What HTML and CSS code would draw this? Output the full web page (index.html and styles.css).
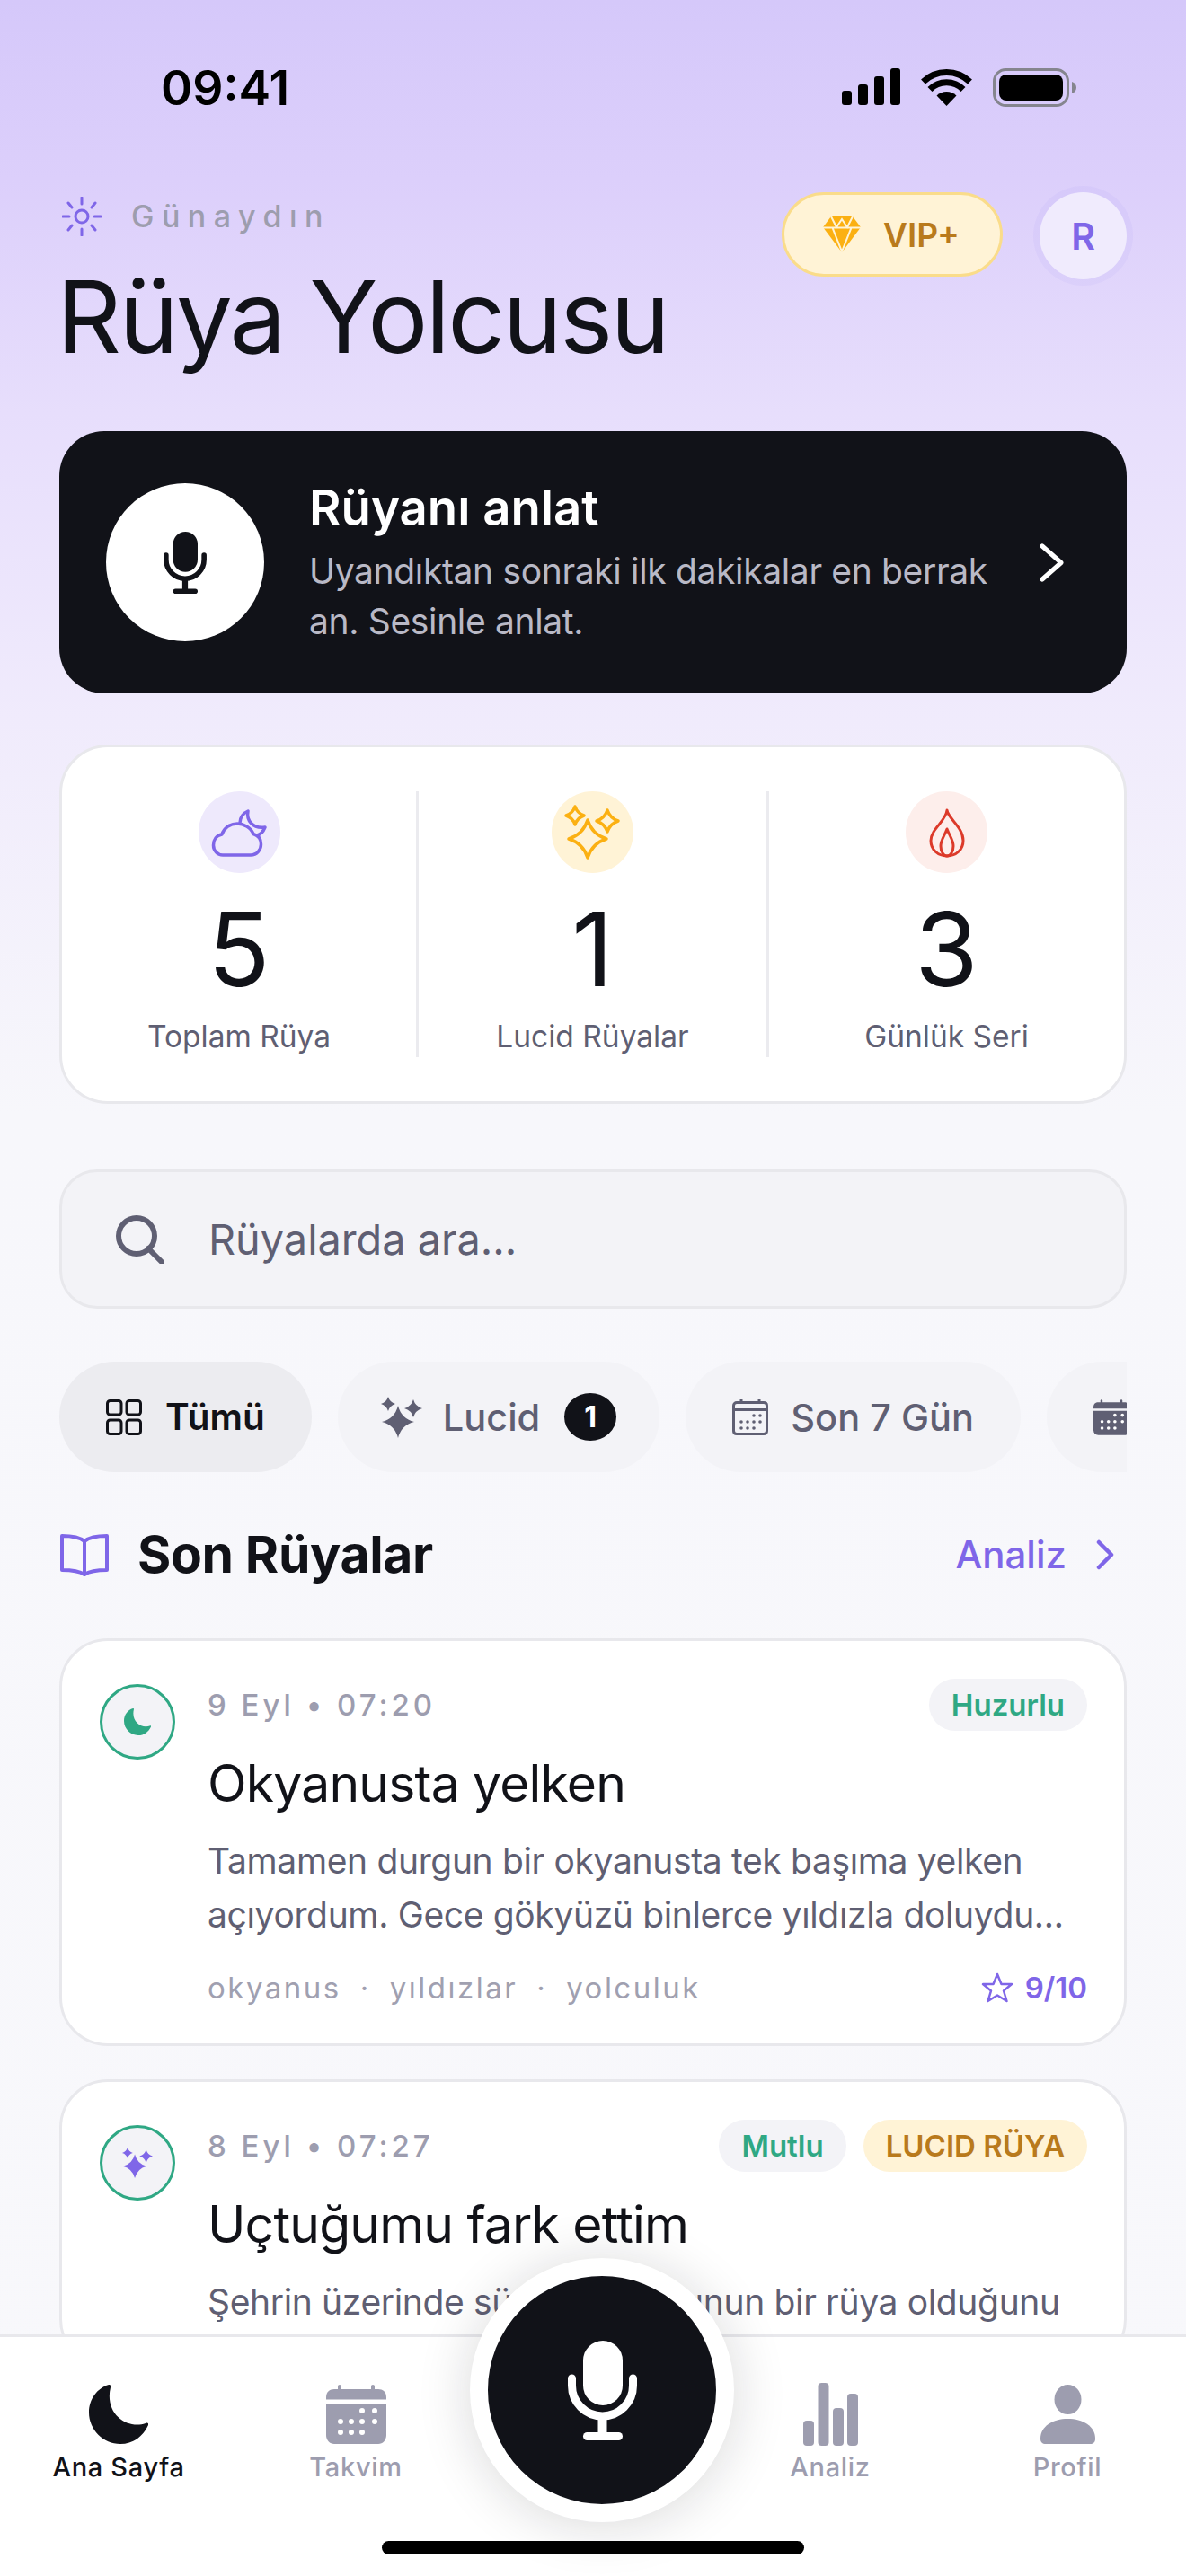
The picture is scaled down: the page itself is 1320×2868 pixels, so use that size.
FILE: index.html
```html
<!DOCTYPE html>
<html lang="tr">
<head>
<meta charset="utf-8">
<title>Rüya Yolcusu</title>
<link rel="stylesheet" href="styles.css">
</head>
<body>
<svg class="sprite" xmlns="http://www.w3.org/2000/svg">
  <symbol id="mic" viewBox="0 0 77 111">
    <rect x="17" y="0" width="44" height="72" rx="22" fill="currentColor"/>
    <path d="M4.5 42v8a34 34 0 0 0 68 0v-8" fill="none" stroke="currentColor" stroke-width="9" stroke-linecap="round"/>
    <rect x="33.5" y="85" width="10" height="20" fill="currentColor"/>
    <rect x="17" y="102" width="44" height="9" rx="4.5" fill="currentColor"/>
  </symbol>
  <symbol id="moon" viewBox="0 0 66 66">
    <path fill="currentColor" d="M22 0C9 4 0 16 0 31C0 50 16 66 35 66C49 66 60 58 66 45C67 43 65 42 63 43C43 50 17 33 24 3C24.500 1 23.500-.5 22 0Z"/>
  </symbol>
  <symbol id="sparkles" viewBox="0 0 46 46">
    <path fill="currentColor" d="M19 10Q22.600 24.400 37 28Q22.600 31.600 19 46Q15.400 31.600 1 28Q15.400 24.400 19 10Z"/>
    <path fill="currentColor" d="M8 0Q9.800 6.200 16 8Q9.800 9.800 8 16Q6.200 9.800 0 8Q6.200 6.200 8 0Z"/>
    <path fill="currentColor" d="M36 3Q38.200 10.800 46 13Q38.200 15.200 36 23Q33.800 15.200 26 13Q33.800 10.800 36 3Z"/>
  </symbol>
  <symbol id="calfill" viewBox="0 0 67 66">
    <rect x="13" y="0" width="4" height="8" rx="2" fill="currentColor"/>
    <rect x="50" y="0" width="4" height="8" rx="2" fill="currentColor"/>
    <path fill="currentColor" d="M0 16.500V14C0 8 4 5 9 5H58C63 5 67 8 67 14V16.500Z"/>
    <path fill="currentColor" fill-rule="evenodd" d="M0 21H67V56C67 62 63 66 58 66H9C4 66 0 62 0 56Z"/>
    <g fill="#fff">
      <circle cx="40" cy="29" r="3"/><circle cx="54" cy="29" r="3"/>
      <circle cx="16" cy="41" r="3"/><circle cx="28" cy="41" r="3"/><circle cx="40" cy="41" r="3"/><circle cx="54" cy="41" r="3"/>
      <circle cx="16" cy="53" r="3"/><circle cx="28" cy="53" r="3"/><circle cx="40" cy="53" r="3"/>
    </g>
  </symbol>
  <symbol id="chev" viewBox="0 0 20 34">
    <path d="M3 3L17 17L3 31" fill="none" stroke="currentColor" stroke-width="4.500" stroke-linecap="round" stroke-linejoin="round"/>
  </symbol>
</svg>

<div class="phone">
  <main class="main">
    <div class="status">
      <span class="time">09:41</span>
      <div class="status-icons">
        <svg class="ic-signal" viewBox="0 0 65 41"><rect x="0" y="25" width="11" height="16" rx="3"/><rect x="18" y="18" width="11" height="23" rx="3"/><rect x="36" y="9" width="11" height="32" rx="3"/><rect x="54" y="0" width="11" height="41" rx="3"/></svg>
        <svg class="ic-wifi" viewBox="0 0 57 42"><path d="M28.500 42L17.500 30.500A15.500 15.500 0 0 1 39.500 30.500Z"/><path class="arc" d="M10 23.500A26 26 0 0 1 47 23.500"/><path class="arc" d="M2.500 15A37.500 37.500 0 0 1 54.500 15"/></svg>
        <svg class="ic-batt" viewBox="0 0 93 43"><rect class="batt-shell" x="1.500" y="1.500" width="82" height="40" rx="13"/><rect x="7" y="7" width="71" height="29" rx="8"/><path class="batt-nub" d="M88 15C91 16 93 18 93 21.500C93 25 91 27 88 28Z"/></svg>
      </div>
    </div>

    <header class="header">
      <div class="header-left">
        <div class="greeting">
          <svg class="ic-sun" viewBox="0 0 44 44"><circle cx="22" cy="22" r="7"/><path d="M22 1V8M22 36V43M1 22H8M36 22H43M7 7L11 12M37 7L33 12M7 37L11 32M37 37L33 32"/></svg>
          <span class="greeting-text">Günaydın</span>
        </div>
        <h1 class="title">Rüya Yolcusu</h1>
      </div>
      <div class="header-right">
        <div class="vip">
          <svg class="ic-diamond" viewBox="0 0 42 40"><path class="d-fill" d="M9 0H33L42 12L21 40L0 12Z"/><path class="d-line" d="M0 12.500H42M10.500 12.500L21 39L31.500 12.500M9 0L15 12L21 3L27 12L33 0"/></svg>
          <span>VIP+</span>
        </div>
        <div class="avatar">R</div>
      </div>
    </header>

    <section class="hero">
      <div class="hero-mic"><svg class="ic-hero-mic"><use href="#mic"/></svg></div>
      <div class="hero-text">
        <div class="hero-title">Rüyanı anlat</div>
        <div class="hero-sub">Uyandıktan sonraki ilk dakikalar en berrak an. Sesinle anlat.</div>
      </div>
      <svg class="ic-hero-chev" viewBox="0 0 27 43"><path d="M3 3L24 21.500L3 40"/></svg>
    </section>

    <section class="stats">
      <div class="stat">
        <svg class="stat-ic stat-ic-purple" viewBox="0 0 91 91"><circle class="disc" cx="45.500" cy="45.500" r="45.500"/><path d="M27 71H58C65 71 69.500 65 69.500 59C69.500 53 66 49 61 47.500C58 40 50 36 43 36C35 36 28 41 26 48C20 49 16.500 54 16.500 60C16.500 66 21 71 27 71Z"/><path d="M46 35C46 29 50 24 55 22C53 32 60 42 74 40C72 45 69 48 65 49"/></svg>
        <div class="stat-num">5</div>
        <div class="stat-label">Toplam Rüya</div>
      </div>
      <div class="stat">
        <svg class="stat-ic stat-ic-amber" viewBox="0 0 91 91"><circle class="disc" cx="45.500" cy="45.500" r="45.500"/><path d="M40 32Q45 48 61 53Q45 58 40 74Q35 58 19 53Q35 48 40 32Z"/><path d="M26 17Q28.500 24.500 36 27Q28.500 29.500 26 37Q23.500 29.500 16 27Q23.500 24.500 26 17Z"/><path d="M62 21Q65 30 74 33Q65 36 62 45Q59 36 50 33Q59 30 62 21Z"/></svg>
        <div class="stat-num">1</div>
        <div class="stat-label">Lucid Rüyalar</div>
      </div>
      <div class="stat">
        <svg class="stat-ic stat-ic-red" viewBox="0 0 91 91"><circle class="disc" cx="45.500" cy="45.500" r="45.500"/><path d="M46 21C47 30 64 40 64 55C64 65 56 72 46 72C36 72 28 65 28 55C28 42 45 33 46 21Z"/><path d="M46 42C49 50 53 54 53 61C53 67 50 72 46 72C42 72 39 67 39 61C39 54 43 50 46 42Z"/></svg>
        <div class="stat-num">3</div>
        <div class="stat-label">Günlük Seri</div>
      </div>
    </section>

    <div class="search">
      <svg class="ic-search" viewBox="0 0 54 54"><circle cx="23" cy="23" r="20"/><path d="M36 37L51 52"/></svg>
      <span>Rüyalarda ara...</span>
    </div>

    <div class="chips">
      <div class="chip chip-active">
        <svg class="ic-grid" viewBox="0 0 40 40"><rect x="1.500" y="1.500" width="15.500" height="15.500" rx="3"/><rect x="23" y="1.500" width="15.500" height="15.500" rx="3"/><rect x="1.500" y="23" width="15.500" height="15.500" rx="3"/><rect x="23" y="23" width="15.500" height="15.500" rx="3"/></svg>
        <span>Tümü</span>
      </div>
      <div class="chip chip-lucid">
        <svg class="ic-chip-spark"><use href="#sparkles"/></svg>
        <span>Lucid</span>
        <span class="badge">1</span>
      </div>
      <div class="chip chip-week">
        <svg class="ic-cal-line" viewBox="0 0 40 40"><path class="cl" d="M5 3.500H35C37.500 3.500 38.500 5 38.500 7V35C38.500 37.500 37 38.500 35 38.500H5C3 38.500 1.500 37.500 1.500 35V7C1.500 5 3 3.500 5 3.500ZM1.500 11.500H38.500M10 0V4M30 0V4"/><g class="cd"><circle cx="24" cy="18" r="1.800"/><circle cx="31" cy="18" r="1.800"/><circle cx="10" cy="25" r="1.800"/><circle cx="17" cy="25" r="1.800"/><circle cx="24" cy="25" r="1.800"/><circle cx="31" cy="25" r="1.800"/><circle cx="10" cy="32" r="1.800"/><circle cx="17" cy="32" r="1.800"/><circle cx="24" cy="32" r="1.800"/></g></svg>
        <span>Son 7 Gün</span>
      </div>
      <div class="chip chip-clipped">
        <svg class="ic-cal-fill"><use href="#calfill"/></svg>
      </div>
    </div>

    <div class="section-head">
      <div class="section-left">
        <svg class="ic-book" viewBox="0 0 54 47"><path d="M27 8C21 3 12 2 2 2V40C12 40 21 41 27 45C33 41 42 40 52 40V2C42 2 33 3 27 8ZM27 8V45"/></svg>
        <h2 class="section-title">Son Rüyalar</h2>
      </div>
      <div class="section-link">
        <span>Analiz</span>
        <svg class="ic-link-chev"><use href="#chev"/></svg>
      </div>
    </div>

    <article class="card">
      <div class="card-avatar"><svg class="ic-card-moon"><use href="#moon"/></svg></div>
      <div class="card-body">
        <div class="card-top">
          <span class="card-date">9 Eyl • 07:20</span>
          <div class="pills"><span class="pill pill-green">Huzurlu</span></div>
        </div>
        <h3 class="card-title">Okyanusta yelken</h3>
        <p class="card-text">Tamamen durgun bir okyanusta tek başıma yelken açıyordum. Gece gökyüzü binlerce yıldızla doluydu...</p>
        <div class="card-foot">
          <span class="tags">okyanus<i>·</i>yıldızlar<i>·</i>yolculuk</span>
          <span class="score"><svg class="ic-star" viewBox="0 0 36 36"><path d="M18 3L22.500 14H34L25 21.500L28.500 33L18 26.500L7.500 33L11 21.500L2 14H13.500Z"/></svg>9/10</span>
        </div>
      </div>
    </article>

    <article class="card">
      <div class="card-avatar"><svg class="ic-card-spark"><use href="#sparkles"/></svg></div>
      <div class="card-body">
        <div class="card-top">
          <span class="card-date">8 Eyl • 07:27</span>
          <div class="pills"><span class="pill pill-green">Mutlu</span><span class="pill pill-amber">LUCID RÜYA</span></div>
        </div>
        <h3 class="card-title">Uçtuğumu fark ettim</h3>
        <p class="card-text">Şehrin üzerinde süzülürken bunun bir rüya olduğunu</p>
      </div>
    </article>
  </main>

  <nav class="nav">
    <div class="nav-item nav-active"><span class="nav-ic"><svg class="ic-nav-moon"><use href="#moon"/></svg></span><span>Ana Sayfa</span></div>
    <div class="nav-item"><span class="nav-ic"><svg class="ic-nav-cal"><use href="#calfill"/></svg></span><span>Takvim</span></div>
    <div class="nav-item"></div>
    <div class="nav-item"><span class="nav-ic"><svg class="ic-nav-bars" viewBox="0 0 61 70"><rect x="0" y="42" width="12" height="28" rx="4"/><rect x="16.500" y="0" width="12" height="70" rx="4"/><rect x="33" y="28" width="12" height="42" rx="4"/><rect x="49" y="12" width="12" height="58" rx="4"/></svg></span><span>Analiz</span></div>
    <div class="nav-item"><span class="nav-ic"><svg class="ic-nav-user" viewBox="0 0 61 66"><ellipse cx="30.500" cy="16.500" rx="15" ry="16.500"/><path d="M0 60C0 46 14 38 30.500 38C47 38 61 46 61 60C61 64 59 66 55 66H6C2 66 0 64 0 60Z"/></svg></span><span>Profil</span></div>
    <div class="record"><svg class="ic-record-mic"><use href="#mic"/></svg></div>
    <div class="home-bar"></div>
  </nav>
</div>
</body>
</html>
```

FILE: styles.css
```css
* { box-sizing: border-box; }
html, body { margin: 0; padding: 0; }
body { font-family: "Inter", "Liberation Sans", sans-serif; color: #111218; }
.sprite { display: none; }

.phone {
  width: 1320px;
  height: 2868px;
  display: flex;
  flex-direction: column;
  overflow: hidden;
  background: linear-gradient(180deg, #d5c8fa 0, #dccffb 200px, #e7defc 460px, #f0ebfc 800px, #f7f7fb 1240px, #f8f8fb 100%);
}
.main { flex: 1; min-height: 0; overflow: hidden; padding: 0 66px; }

/* status bar */
.status { height: 214px; display: flex; justify-content: space-between; align-items: flex-start; padding: 75px 56px 0 113px; }
.time { font-size: 53.5px; line-height: 46px; font-weight: 600; color: #000; }
.status-icons { display: flex; align-items: flex-start; margin-top: 1px; }
.ic-signal { width: 65px; height: 41px; margin-right: 23px; }
.ic-wifi { width: 57px; height: 42px; margin-right: 23px; }
.ic-wifi .arc { fill: none; stroke: #000; stroke-width: 7; }
.ic-batt { width: 93px; height: 43px; }
.batt-shell { fill: none; stroke: #85858e; stroke-width: 3; }
.batt-nub { fill: #85858e; }

/* header */
.header { display: flex; justify-content: space-between; align-items: flex-start; }
.greeting { display: flex; align-items: center; gap: 33px; height: 44px; margin: 5px 0 0 3px; }
.ic-sun { width: 44px; height: 44px; fill: none; stroke: #7f66e8; stroke-width: 3; stroke-linecap: round; }
.greeting-text { font-size: 34px; font-weight: 500; letter-spacing: 8.5px; color: #9d9dae; line-height: 44px; }
.title { margin: 29px 0 0 -3px; font-size: 112px; line-height: 120px; font-weight: 400; letter-spacing: -2.7px; color: #111218; }
.header-right { display: flex; align-items: flex-start; gap: 41px; }
.vip {
  width: 246px; height: 94px; display: flex; align-items: center; gap: 25px; padding-left: 43px;
  background: #fff3d6; border: 3px solid #fadc8a; border-radius: 47px;
  font-size: 37px; font-weight: 600; color: #b97a1c;
}
.ic-diamond { width: 42px; height: 40px; flex: none; }
.d-fill { fill: #fbb012; }
.d-line { fill: none; stroke: #fff3d6; stroke-width: 2; }
.avatar {
  width: 97px; height: 97px; border-radius: 50%; background: #f0ebfd; color: #7f66e8;
  font-size: 41px; font-weight: 600; display: flex; align-items: center; justify-content: center;
  box-shadow: 0 0 0 7px rgba(127, 102, 232, .05);
}

/* hero */
.hero {
  margin-top: 68px; height: 292px; display: flex; align-items: center; gap: 50px; padding: 0 70px 0 52px;
  background: #111218; border-radius: 50px; color: #fff;
}
.hero-mic { width: 176px; height: 176px; flex: none; border-radius: 50%; background: #fff; color: #111218; display: flex; align-items: center; justify-content: center; }
.ic-hero-mic { width: 48px; height: 69px; }
.hero-text { flex: 1; min-width: 0; }
.hero-title { font-size: 54.5px; line-height: 66px; font-weight: 600; }
.hero-sub { margin-top: 10px; font-size: 39px; line-height: 56px; letter-spacing: -.35px; color: #b9b9c6; }
.ic-hero-chev { width: 27px; height: 43px; flex: none; margin-left: -26px; fill: none; stroke: #fff; stroke-width: 5; stroke-linecap: round; stroke-linejoin: round; }

/* stats */
.stats { margin-top: 57px; height: 400px; padding: 49px 0; display: grid; grid-template-columns: 397px 390px 395px; background: #fff; border: 3px solid #e8e8ec; border-radius: 54px; }
.stat { display: flex; flex-direction: column; align-items: center; border-right: 3px solid #ebebef; }
.stat:last-child { border-right: 0; }
.stat-ic { width: 91px; height: 91px; fill: none; stroke-width: 3.5; stroke-linecap: round; stroke-linejoin: round; }
.stat-ic .disc { stroke: none; }
.stat-ic-purple { stroke: #7f66e8; }
.stat-ic-purple .disc { fill: #eee9fc; }
.stat-ic-amber { stroke: #fbb012; }
.stat-ic-amber .disc { fill: #fff3d6; }
.stat-ic-red { stroke: #dc3a2a; stroke-width: 3; }
.stat-ic-red .disc { fill: #fdeeeb; }
.stat-num { margin-top: 28px; font-size: 114px; line-height: 114px; font-weight: 400; }
.stat-label { margin-top: 18px; font-size: 33.5px; line-height: 44px; color: #5f5f73; }

/* search */
.search {
  margin-top: 73px; height: 155px; display: flex; align-items: center; gap: 49px; padding-left: 60px;
  background: #f3f3f7; border: 3px solid #e8e8ec; border-radius: 42px;
  font-size: 46.8px; color: #5f5f73;
}
.ic-search { width: 54px; height: 54px; flex: none; fill: none; stroke: #5f5f73; stroke-width: 6; stroke-linecap: round; }

/* chips */
.chips { margin-top: 59px; display: flex; gap: 29px; overflow: hidden; }
.chip {
  flex: none; height: 123px; display: flex; align-items: center; gap: 26px; padding: 0 52px;
  background: #f3f3f7; border-radius: 62px; font-size: 41.5px; font-weight: 500; color: #5f5f73;
}
.chip-active { background: #ececf0; color: #111218; font-size: 40.5px; font-weight: 600; }
.chip-lucid { padding: 0 48px; gap: 23px; }
.chip-week { gap: 25px; }
.chip-clipped { width: 200px; }
.ic-grid { width: 40px; height: 40px; flex: none; fill: none; stroke: #111218; stroke-width: 3; }
.ic-chip-spark { width: 46px; height: 46px; flex: none; }
.badge { width: 58px; height: 53px; border-radius: 50%; background: #111218; color: #fff; font-size: 32px; font-weight: 700; display: flex; align-items: center; justify-content: center; margin-left: 4px; }
.ic-cal-line { width: 40px; height: 40px; flex: none; }
.cl { fill: none; stroke: #5f5f73; stroke-width: 3; }
.cd { fill: #5f5f73; }
.ic-cal-fill { width: 40px; height: 40px; flex: none; }

/* section head */
.section-head { margin-top: 57px; height: 70px; display: flex; align-items: center; justify-content: space-between; padding-right: 14px; }
.section-left { display: flex; align-items: center; gap: 32px; }
.ic-book { width: 54px; height: 47px; margin-left: 1px; fill: none; stroke: #7f66e8; stroke-width: 4; stroke-linejoin: round; }
.section-title { margin: 0; font-size: 57px; line-height: 70px; font-weight: 700; letter-spacing: -.35px; }
.section-link { display: flex; align-items: center; gap: 33px; font-size: 42px; line-height: 50px; font-weight: 500; color: #7f66e8; }
.ic-link-chev { width: 20px; height: 34px; }

/* cards */
.card { margin-top: 58px; display: flex; gap: 36px; padding: 42px 41px 40px 42px; background: #fff; border: 3px solid #e8e8ec; border-radius: 54px; }
.card + .card { margin-top: 37px; }
.card-avatar { width: 84px; height: 84px; flex: none; margin-top: 6px; border-radius: 50%; border: 3px solid #2fa884; background: #f3f3f7; display: flex; align-items: center; justify-content: center; }
.ic-card-moon { width: 30px; height: 30px; color: #2fa884; }
.ic-card-spark { width: 34px; height: 34px; color: #7f66e8; }
.card-body { flex: 1; min-width: 0; }
.card-top { height: 58px; display: flex; justify-content: space-between; align-items: center; }
.card-date { font-size: 33px; line-height: 58px; font-weight: 500; letter-spacing: 4px; color: #9d9daf; }
.pills { display: flex; gap: 19px; }
.pill { height: 58px; padding: 0 25px; border-radius: 29px; font-size: 33px; line-height: 58px; font-weight: 600; }
.pill-green { background: #f3f3f7; color: #2fa884; }
.pill-amber { background: #fff3d6; color: #b97a1c; }
.card-title { margin: 24px 0 0; font-size: 57px; line-height: 70px; font-weight: 400; letter-spacing: -.8px; }
.card-text { margin: 21px 0 0; font-size: 39px; line-height: 60px; letter-spacing: -.35px; color: #5f5f73; }
.card-foot { margin-top: 29px; height: 44px; display: flex; justify-content: space-between; align-items: center; }
.tags { font-size: 33px; line-height: 44px; letter-spacing: 2.5px; color: #a0a0b0; }
.tags i { font-style: normal; margin: 0 21px; }
.score { display: flex; align-items: center; gap: 13px; font-size: 33px; line-height: 44px; font-weight: 600; color: #7f66e8; }
.ic-star { width: 36px; height: 36px; fill: none; stroke: #7f66e8; stroke-width: 2.5; stroke-linejoin: round; }

/* bottom nav */
.nav { position: relative; flex: none; height: 269px; display: flex; padding-top: 51px; background: #fff; border-top: 3px solid #e8e8ec; }
.nav-item { flex: 1; display: flex; flex-direction: column; align-items: center; font-size: 29px; line-height: 40px; font-weight: 500; letter-spacing: .67px; color: #9d9daf; }
.nav-active { color: #111218; }
.nav-ic { height: 70px; margin-bottom: 4px; display: flex; align-items: center; }
.ic-nav-moon { width: 66px; height: 66px; }
.ic-nav-cal { width: 67px; height: 66px; }
.ic-nav-bars { width: 61px; height: 70px; fill: currentColor; }
.ic-nav-user { width: 61px; height: 66px; fill: currentColor; }
.record {
  position: absolute; left: 523px; top: -88px; width: 294px; height: 294px; border-radius: 50%;
  background: #111218; border: 20px solid #fff; color: #fff;
  display: flex; align-items: center; justify-content: center;
  box-shadow: 0 4px 60px rgba(17, 18, 24, .16);
}
.ic-record-mic { width: 77px; height: 111px; }
.home-bar { position: absolute; left: 425px; bottom: 24px; width: 470px; height: 15px; border-radius: 8px; background: #000; }
```
